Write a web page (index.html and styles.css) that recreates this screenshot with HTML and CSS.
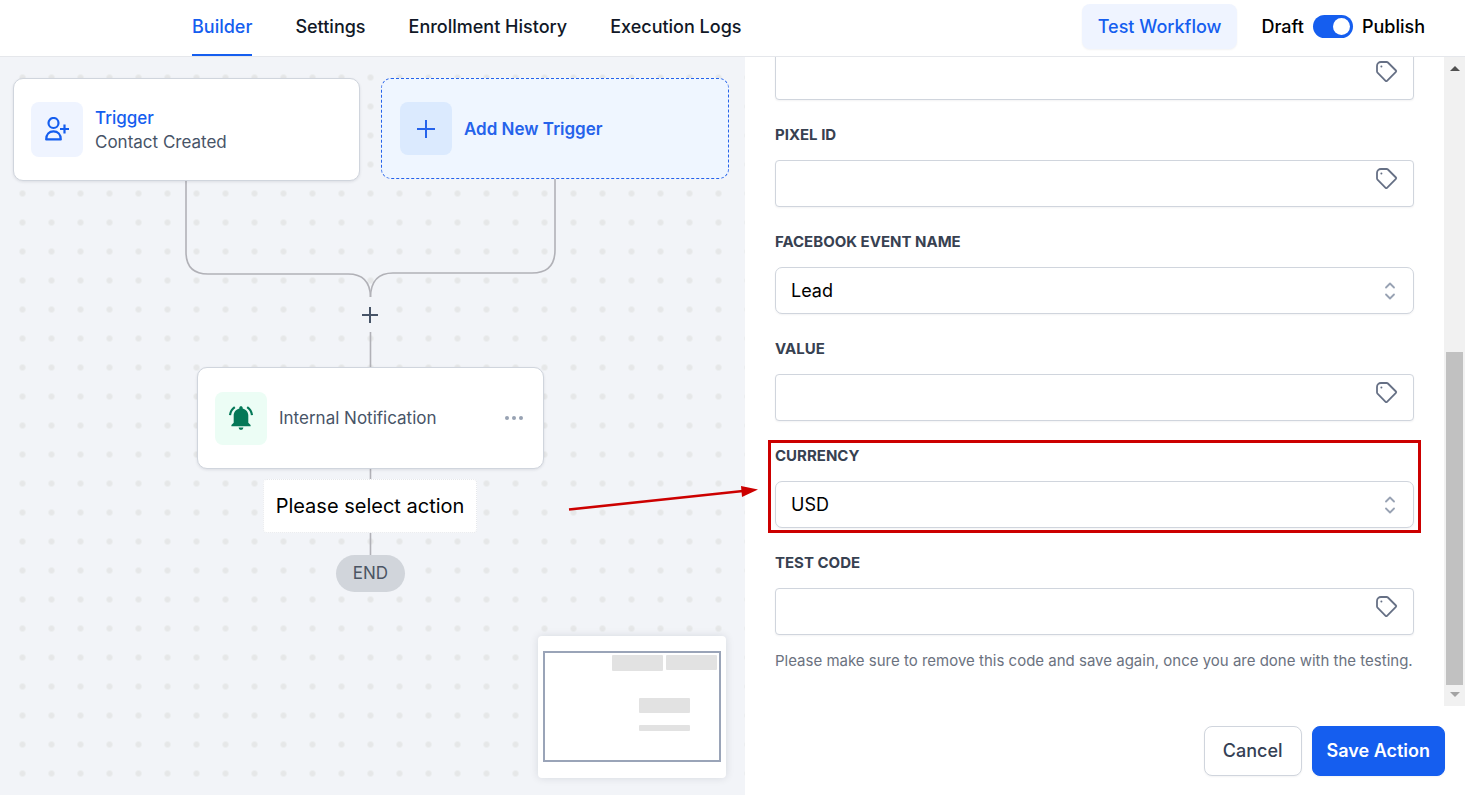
FILE: index.html
```html
<!DOCTYPE html>
<html lang="en">
<head>
  <meta charset="UTF-8">
  <meta name="viewport" content="width=device-width, initial-scale=1">
  <title>Workflow Builder</title>
  <link rel="stylesheet" href="styles.css">
</head>
<body>

<svg class="sprite" aria-hidden="true">
  <symbol id="icon-tag" viewBox="0 0 24 24">
    <path d="M6 2h5.6c.5 0 1 .2 1.3.5l8 8a1 1 0 0 1 0 1.4l-8.9 8.9a1 1 0 0 1-1.4 0l-8.1-8.1A1.8 1.8 0 0 1 2 11.4V6a4 4 0 0 1 4-4z" fill="none" stroke="currentColor" stroke-width="1.8" stroke-linejoin="round"/>
    <circle cx="6.4" cy="6.4" r="1" fill="currentColor"/>
  </symbol>
  <symbol id="icon-updown" viewBox="0 0 12 20">
    <path d="M2 6.5l4-4 4 4M2 13.5l4 4 4-4" fill="none" stroke="currentColor" stroke-width="1.8" stroke-linecap="round" stroke-linejoin="round"/>
  </symbol>
</svg>

<header class="topbar">
  <nav class="tabs">
    <a href="#builder" class="tab active">Builder</a>
    <a href="#settings" class="tab">Settings</a>
    <a href="#history" class="tab">Enrollment History</a>
    <a href="#logs" class="tab">Execution Logs</a>
  </nav>
  <div class="topbar-actions">
    <button type="button" class="btn-test">Test Workflow</button>
    <div class="publish">
      <span>Draft</span>
      <input type="checkbox" id="publish" class="toggle" checked>
      <label for="publish">Publish</label>
    </div>
  </div>
</header>

<main class="workspace">
  <section class="canvas">
    <svg class="edges" width="745" height="560" aria-hidden="true">
      <path d="M186 124V195Q186 217 208 217H348Q370 217 370.5 240"/>
      <path d="M555 122V193Q555 216 532 216H393Q371 216 370.5 240"/>
      <path d="M370.5 275V310M370.5 411V422M370.5 476V498"/>
    </svg>

    <div class="node node-trigger">
      <span class="node-icon icon-blue">
        <svg width="26" height="26" viewBox="0 0 26 26" fill="none" stroke="currentColor" stroke-width="2.2">
          <circle cx="9.5" cy="6" r="5"/>
          <path d="M2.2 22.4c0-5 3-8 7.3-8s7.3 3 7.3 8z" stroke-linejoin="round"/>
          <path d="M20.5 7.5v9M16 12h9"/>
        </svg>
      </span>
      <span class="node-text">
        <span class="node-title">Trigger</span>
        <span>Contact Created</span>
      </span>
    </div>

    <button type="button" class="node node-add">
      <span class="node-icon icon-sky">
        <svg width="18" height="18" viewBox="0 0 18 18" fill="none" stroke="currentColor" stroke-width="2">
          <path d="M9 0v18M0 9h18"/>
        </svg>
      </span>
      <span>Add New Trigger</span>
    </button>

    <button type="button" class="add-step" aria-label="Add step">
      <svg width="16" height="16" viewBox="0 0 16 16" fill="none" stroke="currentColor" stroke-width="2">
        <path d="M8 0v16M0 8h16"/>
      </svg>
    </button>

    <div class="node node-action">
      <span class="node-icon icon-green">
        <svg width="26" height="26" viewBox="0 0 26 26">
          <path d="M13 1.3c1 0 1.7.7 1.7 1.6v.5c3.3.8 5.6 3.6 5.6 7.1v7.2l2.3 2.3v1.2H3.4V20l2.3-2.3v-7.2c0-3.5 2.3-6.3 5.6-7.1v-.5c0-.9.7-1.6 1.7-1.6zM10.6 22.5h4.8a2.4 2.4 0 0 1-4.8 0z" fill="currentColor"/>
          <path d="M6.8 2.2C4.2 4 2.4 6.7 2 10.2M19.2 2.2C21.8 4 23.6 6.7 24 10.2" fill="none" stroke="currentColor" stroke-width="2.2"/>
        </svg>
      </span>
      <span class="node-label">Internal Notification</span>
      <button type="button" class="node-menu" aria-label="More">
        <svg width="18" height="4" viewBox="0 0 18 4" fill="currentColor">
          <circle cx="2" cy="2" r="2"/><circle cx="9" cy="2" r="2"/><circle cx="16" cy="2" r="2"/>
        </svg>
      </button>
    </div>

    <div class="node-prompt">Please select action</div>
    <div class="node-end">END</div>

    <div class="minimap">
      <svg width="178" height="111" viewBox="0 0 178 111">
        <rect x="1" y="1" width="176" height="109" fill="#fff" stroke="#9aa4b8" stroke-width="2"/>
        <g fill="#e2e2e2">
          <rect x="69" y="4" width="51" height="16" rx="1"/>
          <rect x="123" y="4" width="51" height="15" rx="1"/>
          <rect x="96" y="47" width="51" height="15" rx="1"/>
          <rect x="96" y="74" width="51" height="6" rx="1"/>
        </g>
      </svg>
    </div>
  </section>

  <aside class="panel">
    <svg class="arrow" width="192" height="26" viewBox="0 0 192 26" aria-hidden="true">
      <path d="M2 22.5L176 4" fill="none" stroke="#cc0000" stroke-width="2.6"/>
      <path d="M174 -1L191 2.5L175 10z" fill="#cc0000"/>
    </svg>

    <div class="panel-scroll">
      <form class="fields" id="actionForm">
        <div class="field">
          <div class="control">
            <input type="text" id="token" aria-label="Access token">
            <button type="button" class="tag-btn" aria-label="Insert value"><svg><use href="#icon-tag"/></svg></button>
          </div>
        </div>
        <div class="field">
          <label for="pixel">PIXEL ID</label>
          <div class="control">
            <input type="text" id="pixel">
            <button type="button" class="tag-btn" aria-label="Insert value"><svg><use href="#icon-tag"/></svg></button>
          </div>
        </div>
        <div class="field">
          <label for="event">FACEBOOK EVENT NAME</label>
          <div class="control">
            <select id="event"><option>Lead</option></select>
            <svg class="updown"><use href="#icon-updown"/></svg>
          </div>
        </div>
        <div class="field">
          <label for="value">VALUE</label>
          <div class="control">
            <input type="text" id="value">
            <button type="button" class="tag-btn" aria-label="Insert value"><svg><use href="#icon-tag"/></svg></button>
          </div>
        </div>
        <div class="field highlight">
          <label for="currency">CURRENCY</label>
          <div class="control">
            <select id="currency"><option>USD</option></select>
            <svg class="updown"><use href="#icon-updown"/></svg>
          </div>
        </div>
        <div class="field">
          <label for="testcode">TEST CODE</label>
          <div class="control">
            <input type="text" id="testcode">
            <button type="button" class="tag-btn" aria-label="Insert value"><svg><use href="#icon-tag"/></svg></button>
          </div>
          <p class="help">Please make sure to remove this code and save again, once you are done with the testing.</p>
        </div>
      </form>
      <div class="scrollbar" aria-hidden="true">
        <span class="arrow-up"></span>
        <span class="thumb"></span>
        <span class="arrow-down"></span>
      </div>
    </div>

    <div class="panel-footer">
      <button type="button" class="btn">Cancel</button>
      <button type="submit" form="actionForm" class="btn btn-primary">Save Action</button>
    </div>
  </aside>
</main>

</body>
</html>
```
FILE: styles.css
```css
* { box-sizing: border-box; }
body { font-family: Inter, "Liberation Sans", sans-serif; font-size: 18px; line-height: 24px; color: #000; background: #fff; margin: 0; height: 100vh; display: flex; flex-direction: column; overflow: hidden; }
button, input, select { font: inherit; margin: 0; }
button { cursor: pointer; }
svg { display: block; }
.sprite { position: absolute; width: 0; height: 0; }

/* top bar */
.topbar { display: flex; justify-content: space-between; height: 57px; flex: none; padding: 0 40px 0 192px; border-bottom: 1px solid #e5e7eb; }
.tabs { display: flex; gap: 43px; }
.tab { padding-top: 15px; font-weight: 500; color: #111827; text-decoration: none; border-bottom: 2px solid transparent; }
.tab.active { color: #155eef; border-bottom-color: #155eef; }
.topbar-actions { display: flex; align-items: flex-start; gap: 24px; padding-top: 4px; }
.btn-test { height: 45px; padding: 0 16px; border: none; border-radius: 8px; background: #eff4ff; color: #155eef; font-weight: 500; box-shadow: 0 1px 2px rgba(16, 24, 40, 0.05); }
.publish { display: flex; align-items: center; gap: 9px; height: 45px; font-weight: 500; }
.toggle { appearance: none; width: 40px; height: 23px; border-radius: 12px; background: #d1d5db; padding: 3px; cursor: pointer; }
.toggle::before { content: ""; display: block; width: 17px; height: 17px; border-radius: 50%; background: #fff; }
.toggle:checked { background: #155eef; }
.toggle:checked::before { margin-left: 17px; }

.workspace { display: flex; flex: 1; min-height: 0; }

/* canvas */
.canvas { position: relative; flex: 1; min-width: 0; overflow: hidden; background: #f2f4f8 radial-gradient(circle, #e6e7e8 2px, #e6e7e800 4px) 8px 6px / 29px 29px; }
.edges { position: absolute; left: 0; top: 0; fill: none; stroke: #b1b1b7; stroke-width: 1.6; }
.node { position: absolute; display: flex; align-items: center; gap: 12px; padding: 0 17px; width: 347px; height: 102px; background: #fff; border: 1px solid #d0d5dd; border-radius: 10px; color: #475467; font-size: 17px; box-shadow: 0 1px 3px rgba(16, 24, 40, 0.1); }
.node-trigger { left: 13px; top: 21px; height: 103px; }
.node-add { left: 381px; top: 21px; width: 348px; height: 101px; padding: 0 18px; background: #eff6ff; border: 1px dashed #2563eb; color: #2563eb; font-weight: 600; box-shadow: none; }
.node-action { left: 197px; top: 310px; }
.node-icon { display: flex; align-items: center; justify-content: center; width: 52px; height: 53px; border-radius: 8px; flex: none; }
.icon-blue { height: 55px; background: #eff4ff; color: #155eef; }
.icon-sky { background: #dbeafe; color: #2563eb; }
.icon-green { background: #ecfdf5; color: #047857; }
.node-text { display: flex; flex-direction: column; }
.node-title { color: #155eef; font-weight: 500; }
.node-label { flex: 1; }
.node-menu { border: none; background: none; padding: 8px 3px; color: #98a2b3; }
.add-step { position: absolute; left: 354px; top: 242px; width: 32px; height: 32px; padding: 8px; border: none; background: #f2f4f8; color: #475467; }
.node-prompt { position: absolute; left: 263px; top: 422px; width: 214px; padding: 14px 0; text-align: center; font-size: 20px; background: #fff; border: 1px dotted #e5e7eb; border-radius: 4px; }
.node-end { position: absolute; left: 336px; top: 498px; width: 69px; height: 37px; line-height: 37px; text-align: center; border-radius: 19px; background: #d1d5db; color: #4b5563; font-size: 17px; }
.minimap { position: absolute; right: 19px; bottom: 17px; padding: 15px 5px 16px; background: #fff; border-radius: 4px; box-shadow: 0 0 8px rgba(16, 24, 40, 0.12); }

/* side panel */
.panel { position: relative; display: flex; flex-direction: column; width: 720px; flex: none; background: #fff; }
.arrow { position: absolute; left: -178px; top: 430px; z-index: 2; overflow: visible; }
.panel-scroll { display: flex; flex: 1; min-height: 0; overflow: hidden; }
.fields { display: flex; flex-direction: column; justify-content: flex-end; gap: 25px; flex: 1; padding: 0 30px 35px; }
.field { position: relative; flex: none; }
.field label { display: block; margin-bottom: 15px; font-size: 15px; line-height: 20px; font-weight: 700; color: #374151; }
.highlight::after { content: ""; position: absolute; inset: -6px -7px -5px; border: 3px solid #cc0000; pointer-events: none; }
.control { position: relative; }
.control input, .control select { display: block; width: 100%; height: 47px; padding: 0 16px; border: 1px solid #d0d5dd; border-radius: 4px; background: #fff; color: #000; box-shadow: 0 1px 2px rgba(16, 24, 40, 0.05); }
.control select { appearance: none; border-radius: 7px; padding: 0 15px; }
.tag-btn { position: absolute; right: 15px; top: 7px; padding: 0; border: none; background: none; color: #667085; }
.tag-btn svg { width: 24px; height: 24px; }
.updown { position: absolute; right: 18px; top: 14px; width: 12px; height: 20px; color: #98a2b3; pointer-events: none; }
.help { margin: 16px 0 0; font-size: 15px; line-height: 20px; color: #6b7280; white-space: nowrap; }

.scrollbar { display: flex; flex-direction: column; align-items: center; width: 21px; background: #f1f1f1; }
.arrow-up, .arrow-down { height: 21px; flex: none; }
.arrow-up::before, .arrow-down::before { content: ""; display: block; border: 5px solid transparent; }
.arrow-up::before { margin-top: 4px; border-bottom-color: #505050; }
.arrow-down::before { margin-top: 7px; border-top-color: #a3a3a3; }
.thumb { width: 17px; height: 333px; margin-top: auto; background: #c1c1c1; }

.panel-footer { display: flex; justify-content: flex-end; gap: 10px; padding: 20px 20px 19px; }
.btn { height: 50px; padding: 0 18px; border: 1px solid #d0d5dd; border-radius: 8px; background: #fff; color: #344054; font-weight: 500; box-shadow: 0 1px 2px rgba(16, 24, 40, 0.05); }
.btn-primary { padding: 0 14px; background: #155eef; border-color: #155eef; color: #fff; font-weight: 600; }
```
